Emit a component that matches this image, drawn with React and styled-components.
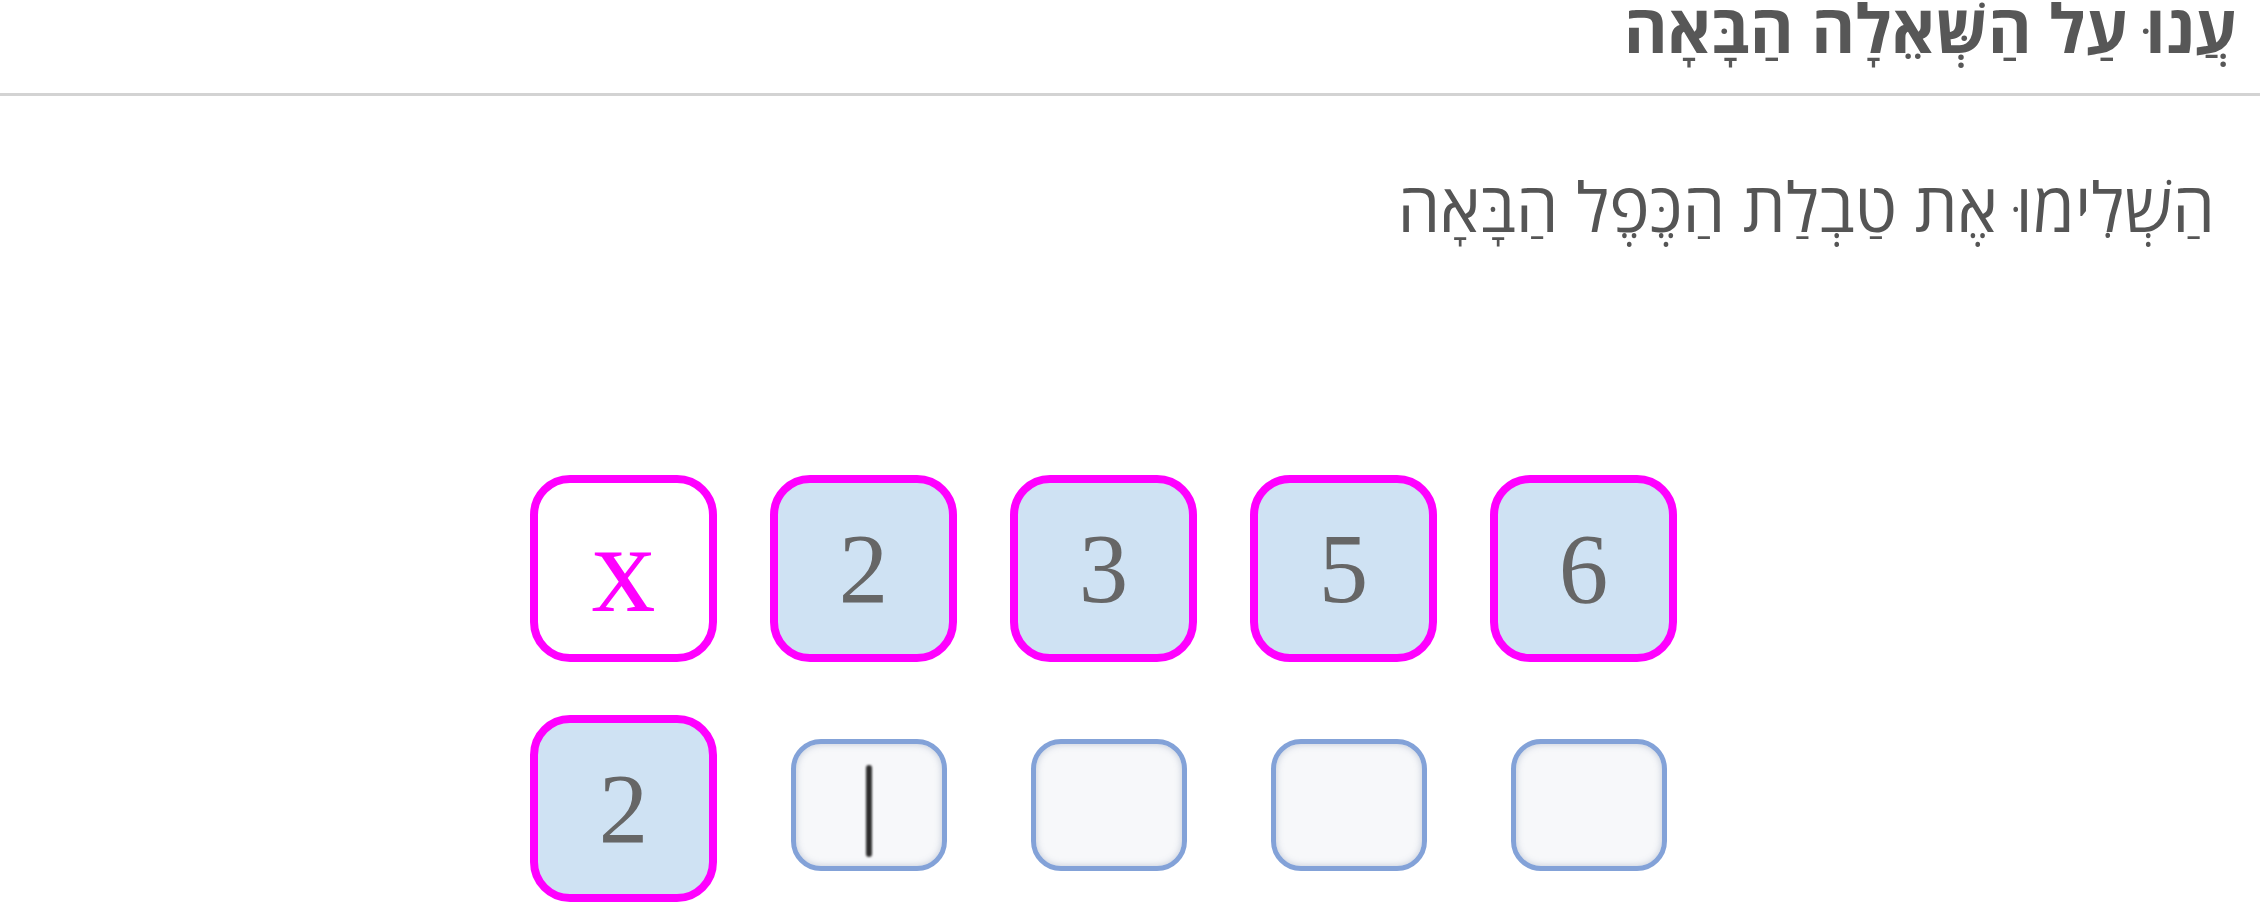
import styled, { createGlobalStyle } from "styled-components";

const GlobalStyle = createGlobalStyle`
  body {
    margin: 0;
    background: #ffffff;
    font-family: "Open Sans", "DejaVu Sans", sans-serif;
  }
`;

const Page = styled.div`
  width: 2260px;
  height: 903px;
  overflow: hidden;
`;

const Header = styled.div`
  direction: rtl;
  height: 96px;
  border-bottom: 3px solid #d3d3d3;
  padding-right: 23px;
  box-sizing: border-box;
`;

const Title = styled.h1`
  margin: 0;
  font-size: 67px;
  font-weight: 700;
  line-height: 54px;
  color: #575757;
`;

const Question = styled.p`
  direction: rtl;
  margin: 75px 0 0;
  padding-right: 45px;
  font-size: 68px;
  line-height: 70px;
  color: #555555;
`;

const Table = styled.div`
  display: flex;
  flex-direction: column;
  gap: 53px;
  padding-left: 530px;
  margin-top: 234px;
`;

const Row = styled.div`
  display: flex;
  gap: 53px;
`;

const Slot = styled.div`
  width: 187px;
  height: 187px;
  display: flex;
  align-items: flex-start;
  justify-content: center;
  padding-top: 24px;
  box-sizing: border-box;
`;

const Cell = styled.div`
  box-sizing: border-box;
  width: 187px;
  height: 187px;
  border: 8px solid #ff00ff;
  border-radius: 40px;
  background: ${(p) => (p.$operator ? "#ffffff" : "#cfe2f3")};
  color: ${(p) => (p.$operator ? "#ff00ff" : "#666666")};
  font-family: "Liberation Serif", serif;
  font-size: ${(p) => (p.$operator ? "128px" : "99px")};
  display: flex;
  align-items: center;
  justify-content: center;
`;

const Answer = styled.div`
  box-sizing: border-box;
  width: 156px;
  height: 132px;
  margin-left: 10px;
  border: 5px solid #83a2d8;
  border-radius: 30px;
  background: #f7f8fa;
  box-shadow: inset 0 0 7px rgba(90, 110, 150, 0.35);
  display: flex;
  align-items: center;
  justify-content: center;
`;

const Caret = styled.span`
  width: 6px;
  height: 92px;
  margin-top: 12px;
  background: #2e2e2e;
  border-radius: 3px;
  filter: blur(0.8px);
`;

const factors = [2, 3, 5, 6];

export default function App() {
  return (
    <Page>
      <GlobalStyle />
      <Header>
        <Title>עֲנוּ עַל הַשְּׁאֵלָה הַבָּאָה</Title>
      </Header>
      <Question>הַשְׁלִימוּ אֶת טַבְלַת הַכֶּפֶל הַבָּאָה</Question>
      <Table>
        <Row>
          <Cell $operator>x</Cell>
          {factors.map((n) => (
            <Cell key={n}>{n}</Cell>
          ))}
        </Row>
        <Row>
          <Cell>2</Cell>
          {factors.map((n, i) => (
            <Slot key={n}>
              <Answer>{i === 0 && <Caret />}</Answer>
            </Slot>
          ))}
        </Row>
      </Table>
    </Page>
  );
}
